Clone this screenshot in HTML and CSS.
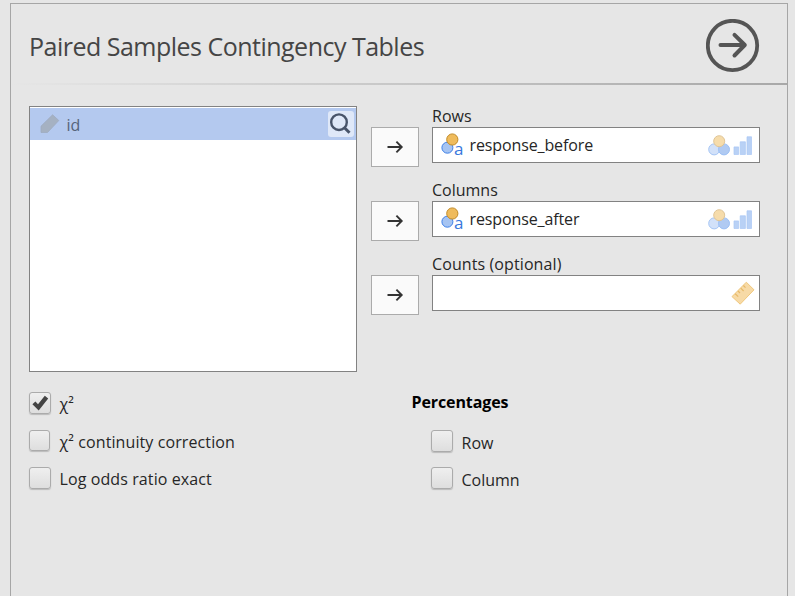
FILE: index.html
```html
<!DOCTYPE html>
<html lang="en">
<head>
<meta charset="utf-8">
<title>Paired Samples Contingency Tables</title>
<link rel="stylesheet" href="styles.css">
</head>
<body>
<svg class="defs" width="0" height="0" aria-hidden="true">
  <symbol id="arrow" viewBox="0 0 18 16"><path d="M1.5 8H16M10.4 2.7L15.7 8L10.4 13.3" fill="none" stroke="#333" stroke-width="1.9"/></symbol>
  <symbol id="nominal-text" viewBox="0 0 24 24">
    <circle cx="6.4" cy="15.7" r="5.5" fill="#a6c4f2" stroke="#3e80e8"/>
    <circle cx="11.3" cy="7.5" r="5.6" fill="#efbb5c" stroke="#c18a26"/>
  </symbol>
  <symbol id="nominal" viewBox="0 0 24 24">
    <circle cx="6.2" cy="16.4" r="5.5" fill="#d2e1f9" stroke="#a5c5f5"/>
    <circle cx="16" cy="16.4" r="5.5" fill="#b0caf2" stroke="#9cc0f5"/>
    <circle cx="11.2" cy="8.2" r="5.5" fill="#f6dcab" stroke="#e0c596"/>
  </symbol>
  <symbol id="ordinal" viewBox="0 0 20 20">
    <path d="M1 19.5V11.9H5.6V19.5ZM7.2 19.5V6.8H12.4V19.5ZM14 19.5V1.8H18.5V19.5Z" fill="#b9d1f5" stroke="#a9c7f5" stroke-width=".7"/>
  </symbol>
</svg>
<main class="panel">
  <header class="header">
    <h1>Paired Samples Contingency Tables</h1>
    <svg class="go" viewBox="0 0 54 54"><circle cx="26.5" cy="26.5" r="24.7" fill="none" stroke="#555" stroke-width="3.8"/><path d="M14.5 26H38.5M28.5 15.8L38.8 26L28.5 36.5" fill="none" stroke="#555" stroke-width="4" stroke-linecap="round" stroke-linejoin="round"/></svg>
  </header>
  <div class="divider"></div>
  <section class="variables">
    <div class="source">
      <div class="item">
        <svg class="pencil" viewBox="0 0 20 20"><path d="M1 12.2L12.6 .8L18.8 6.5L7.5 18.5H1Z" fill="#a5b1c2" stroke="#9eabc0" stroke-width=".8"/></svg>
        <span class="item-name">id</span>
        <span class="search"><svg viewBox="0 0 26 26"><circle cx="11" cy="11.2" r="7.8" fill="none" stroke="#48546a" stroke-width="2.4"/><path d="M16 16.2L21.5 21.7" stroke="#48546a" stroke-width="3"/></svg></span>
      </div>
    </div>
    <div class="targets">
      <div class="target">
        <button class="assign"><svg><use href="#arrow"/></svg></button>
        <div class="field"><label class="rows">Rows</label>
          <div class="box"><span class="type"><svg><use href="#nominal-text"/></svg><b>a</b></span><span class="before">response_before</span><svg class="nominal"><use href="#nominal"/></svg><svg class="ordinal"><use href="#ordinal"/></svg></div>
        </div>
      </div>
      <div class="target">
        <button class="assign"><svg><use href="#arrow"/></svg></button>
        <div class="field"><label class="columns">Columns</label>
          <div class="box"><span class="type"><svg><use href="#nominal-text"/></svg><b>a</b></span><span class="after">response_after</span><svg class="nominal"><use href="#nominal"/></svg><svg class="ordinal"><use href="#ordinal"/></svg></div>
        </div>
      </div>
      <div class="target">
        <button class="assign"><svg><use href="#arrow"/></svg></button>
        <div class="field"><label class="counts">Counts (optional)</label>
          <div class="box"><svg class="ruler" viewBox="0 0 24 24"><path d="M1 15.6L15.3 1.2L23 8.8L9.2 23.2Z" fill="#f7daa6" stroke="#efc77d"/><path d="M4.2 12.8L7.2 15.6M7 10L9 12M9.8 7.2L12.6 10M12.4 4.5L14.5 6.6" stroke="#e7b968" stroke-width="1.2"/></svg></div>
        </div>
      </div>
    </div>
  </section>
  <section class="options">
    <div class="tests">
      <div class="option"><span class="check"><svg viewBox="0 0 20 20"><path d="M2.4 11.2L5.4 8.4L8 11.2L14.8 2.8L18.2 5.4L8.7 17.6Z" fill="#444"/></svg></span><span class="chi">χ²</span></div>
      <div class="option"><span class="check small"></span><span class="correction">χ² continuity correction</span></div>
      <div class="option"><span class="check"></span><span class="odds">Log odds ratio exact</span></div>
    </div>
    <div class="percentages">
      <h2>Percentages</h2>
      <div class="option"><span class="check"></span><span class="row">Row</span></div>
      <div class="option"><span class="check"></span><span class="column">Column</span></div>
    </div>
  </section>
</main>
</body>
</html>
```
FILE: styles.css
```css
* { box-sizing: border-box; }
body { margin: 0; padding: 3px 7px 0 10px; height: 596px; overflow: hidden; background: #e6e6e6; color: #262626; font: 16px/22px "Open Sans", "Noto Sans", sans-serif; }
svg { display: block; flex: none; }
.defs { position: absolute; }
.panel { height: 620px; border: 1px solid #a6a6a6; }
.header { display: flex; justify-content: space-between; height: 79px; padding: 15px 27px 0 18px; }
h1 { margin: 10px 0 0; font-size: 25px; line-height: 34px; font-weight: 400; letter-spacing: -.51px; color: #454545; white-space: nowrap; }
.go { width: 54px; height: 54px; }
.divider { height: 2px; background: linear-gradient(90deg, #e6e6e6, #a8a8a8); }
.variables { display: flex; gap: 14px; padding: 21px 0 0 18px; height: 287px; }
.source { width: 328px; height: 266px; border: 1px solid #828282; background: #fff; padding-top: 1px; }
.item { display: flex; align-items: center; height: 32px; padding: 0 2px 0 9.5px; background: #b4c9ef; }
.pencil { width: 20px; height: 20px; }
.item-name { margin: 2px auto 0 7px; color: #56647a; }
.search { width: 26px; height: 26px; border-radius: 3px; background: #dfe8f8; }
.targets { display: flex; flex-direction: column; }
.target { display: flex; align-items: flex-start; gap: 13px; height: 74px; }
.assign { width: 48px; height: 40px; margin-top: 21px; padding: 0; display: grid; place-items: center; border: 1px solid #ababab; background: #fafafa; }
.assign svg { width: 18px; height: 16px; }
.field label { display: block; height: 21px; line-height: 20px; white-space: nowrap; }
.box { display: flex; align-items: center; width: 328px; height: 36px; padding: 0 6px 0 8px; background: #fff; border: 1px solid #828282; }
.box > span:nth-child(2) { margin-right: auto; }
.before, .after { letter-spacing: -.12px; }
.counts { letter-spacing: .1px; }
.correction, .odds { letter-spacing: .1px; }
.type { display: flex; width: 28.5px; height: 26px; }
.type svg { width: 24px; height: 24px; margin-right: -11px; }
.type b { margin-top: 6.5px; font: 17px/20px "Open Sans", sans-serif; color: #3778dd; }
.nominal { width: 24px; height: 24px; }
.ordinal { width: 20px; height: 20px; margin-left: 1px; }
.ruler { width: 24px; height: 24px; margin: 0 -2px 0 auto; }
.options { display: flex; padding: 20px 0 0 18px; }
.tests { width: 382.5px; }
.option { display: flex; height: 37.5px; white-space: nowrap; }
.check { width: 22px; height: 22px; margin-right: 8.5px; border: 1px solid #ababab; border-radius: 3px; background: linear-gradient(#efefef, #dedede); box-shadow: 0 1px 1px #bbb; }
.check.small { width: 21px; height: 21px; margin-right: 9.5px; }
.option > span:last-child { margin-top: 1px; }
h2 { margin: -1px 0 17px; font-size: 16px; line-height: 22px; letter-spacing: -.1px; color: #000; }
.percentages .option { padding-left: 19.5px; height: 37px; }
.percentages .option > span:last-child { margin-top: 1.5px; }
```
